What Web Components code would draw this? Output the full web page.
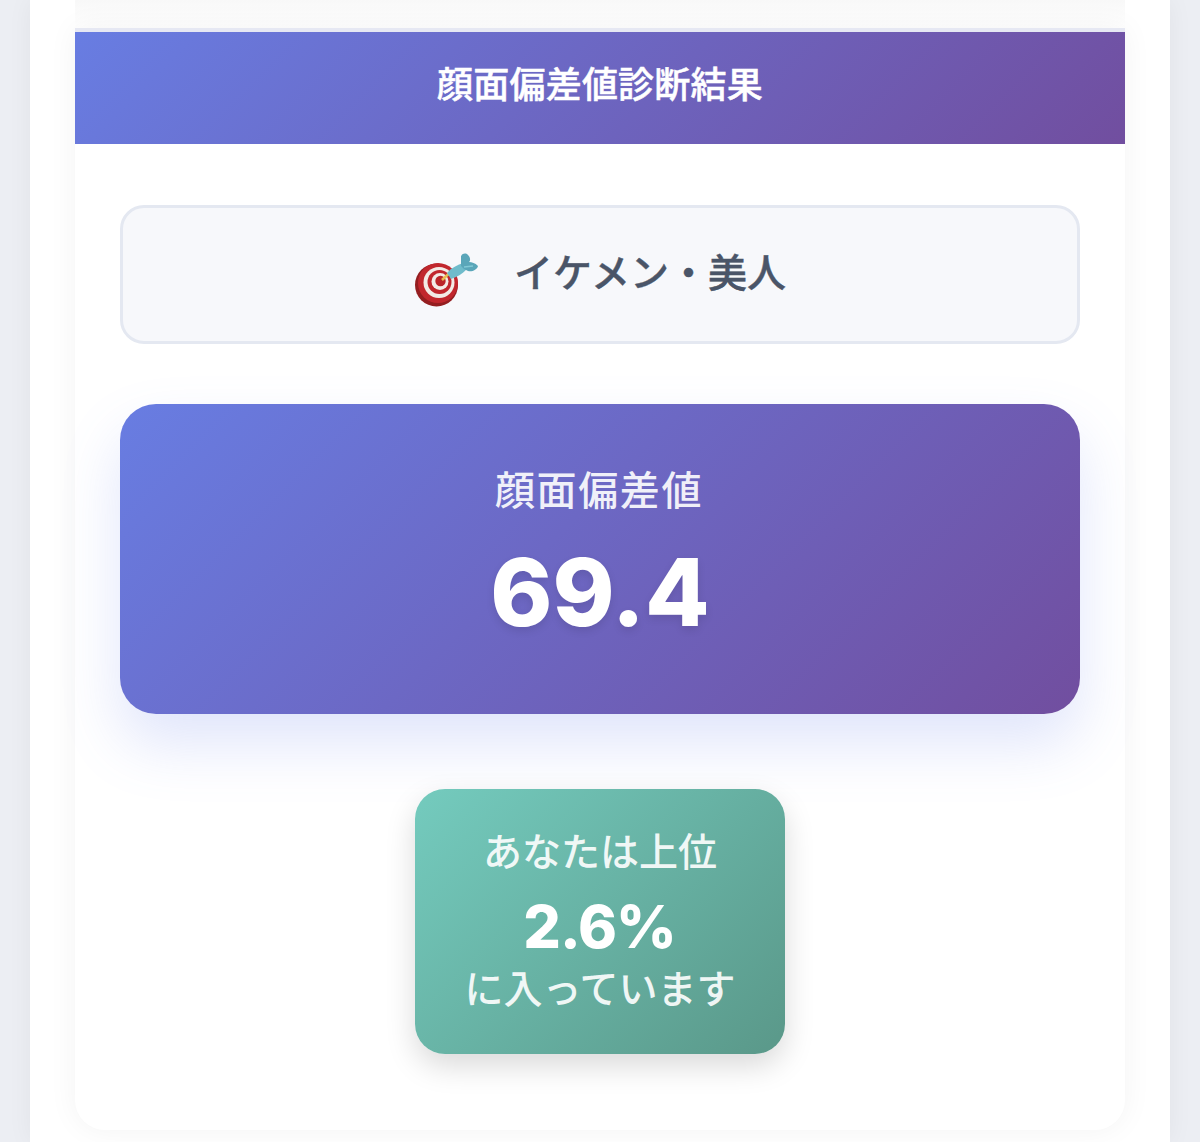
<!DOCTYPE html>
<html lang="ja">
<head>
<meta charset="utf-8">
<title>顔面偏差値診断結果</title>
<style>
    html, body { margin: 0; height: 1142px; overflow: hidden; }
    body {
        background: #eceef3;
        font-family: Inter, "Noto Sans CJK JP", sans-serif;
    }
</style>
</head>
<body>
<result-page>
    <result-card title="顔面偏差値診断結果">
        <type-box label="イケメン・美人"></type-box>
        <score-card label="顔面偏差値" value="69.4"></score-card>
        <rank-badge before="あなたは上位" value="2.6%" after="に入っています"></rank-badge>
    </result-card>
</result-page>

<script>
class ResultPage extends HTMLElement {
    constructor() {
        super();
        this.attachShadow({mode: 'open'});
        this.shadowRoot.innerHTML = `
            <style>
                :host {
                    display: block;
                    height: 1142px;
                    margin: 0 30px;
                    padding: 0 45px;
                    background: #fff;
                    box-shadow: 0 0 24px rgba(0, 0, 0, .05);
                }
                .prev {
                    height: 28px;
                    background: linear-gradient(#f8f8f8, #fff);
                }
            </style>
            <div class="prev"></div>
            <slot></slot>
        `;
    }
}

class ResultCard extends HTMLElement {
    constructor() {
        super();
        this.attachShadow({mode: 'open'});
        this.shadowRoot.innerHTML = `
            <style>
                :host {
                    display: block;
                    border-top: 4px solid #e6e8f3;
                    background: #fff;
                    border-radius: 0 0 30px 30px;
                    box-shadow: 0 0 30px rgba(0, 0, 0, .05);
                }
                header {
                    height: 112px;
                    box-sizing: border-box;
                    padding-bottom: 12px;
                    display: flex;
                    align-items: center;
                    justify-content: center;
                    background: linear-gradient(135deg, #687de2 0%, #714e9f 100%);
                    color: #fff;
                    font-size: 36px;
                    font-weight: 500;
                    -webkit-text-stroke: .5px #fff;
                    letter-spacing: .2px;
                }
                .body {
                    display: flex;
                    flex-direction: column;
                    align-items: center;
                    padding: 61px 45px 76px;
                }
            </style>
            <header></header>
            <div class="body"><slot></slot></div>
        `;
        this.shadowRoot.querySelector('header').textContent = this.getAttribute('title');
    }
}

class TypeBox extends HTMLElement {
    constructor() {
        super();
        this.attachShadow({mode: 'open'});
        this.shadowRoot.innerHTML = `
            <style>
                :host {
                    display: flex;
                    align-items: center;
                    justify-content: center;
                    gap: 36px;
                    box-sizing: border-box;
                    width: 960px;
                    height: 139px;
                    background: #f7f8fb;
                    border: 3px solid #e4e8f1;
                    border-radius: 24px;
                    color: #4a5568;
                    font-size: 39px;
                    font-weight: 500;
                    -webkit-text-stroke: .4px #4a5568;
                }
                svg { width: 64px; height: 56px; margin-top: 10px; flex: none; }
                span { margin-bottom: 10px; }
            </style>
            <!-- direct hit emoji, redrawn by hand -->
            <svg viewBox="0 0 64 56">
                <circle cx="22.5" cy="33" r="21.5" fill="#941e20"/>
                <circle cx="24" cy="31" r="20" fill="#c1272d"/>
                <circle cx="25" cy="30.5" r="15.5" fill="#f3ebe6"/>
                <circle cx="25.5" cy="30" r="12" fill="#c1272d"/>
                <circle cx="26" cy="29.5" r="8.5" fill="#f3ebe6"/>
                <circle cx="26.5" cy="29" r="5.2" fill="#bb2529"/>
                <path d="M28 28 L35 21.5" stroke="#e6bd52" stroke-width="2.5"/>
                <path d="M33 21 C37 16 43 13 49 11 L53 17 C48 22 43 25 37 27 Z" fill="#6fbccb"/>
                <path d="M47 14 L47 4 C49 1 52 1 54 3 C56 5 57 8 55 10 C58 10 61 11 64 14 C63 18 58 20 54 19 L50 17 Z" fill="#5aa6b9"/>
                <path d="M50 15 L59 14" stroke="#82c9d6" stroke-width="1.5"/>
            </svg>
            <span></span>
        `;
        this.shadowRoot.querySelector('span').textContent = this.getAttribute('label');
    }
}

class ScoreCard extends HTMLElement {
    constructor() {
        super();
        this.attachShadow({mode: 'open'});
        this.shadowRoot.innerHTML = `
            <style>
                :host {
                    display: flex;
                    flex-direction: column;
                    align-items: center;
                    box-sizing: border-box;
                    width: 960px;
                    height: 310px;
                    margin-top: 60px;
                    padding-top: 58px;
                    border-radius: 36px;
                    background: linear-gradient(135deg, #687de2 0%, #714e9f 100%);
                    box-shadow: 0 30px 60px rgba(102, 126, 234, .2);
                    color: #fff;
                }
                .label {
                    font-size: 40px;
                    line-height: 58px;
                    letter-spacing: 1.6px;
                    font-weight: 500;
                    margin-right: 2px;
                    opacity: .9;
                }
                .value {
                    margin-top: 14px;
                    font-size: 94px;
                    line-height: 116px;
                    font-weight: 800;
                    text-shadow: 0 4px 8px rgba(0, 0, 0, .1);
                }
            </style>
            <div class="label"></div>
            <div class="value"></div>
        `;
        this.shadowRoot.querySelector('.label').textContent = this.getAttribute('label');
        this.shadowRoot.querySelector('.value').textContent = this.getAttribute('value');
    }
}

class RankBadge extends HTMLElement {
    constructor() {
        super();
        this.attachShadow({mode: 'open'});
        this.shadowRoot.innerHTML = `
            <style>
                :host {
                    display: flex;
                    flex-direction: column;
                    align-items: center;
                    box-sizing: border-box;
                    width: 370px;
                    height: 265px;
                    margin-top: 75px;
                    padding-top: 38px;
                    border-radius: 30px;
                    background: linear-gradient(135deg, #74cbbe 0%, #5a9889 100%);
                    box-shadow: 0 12px 30px rgba(0, 0, 0, .15);
                    color: #fff;
                }
                .line { font-size: 39px; line-height: 50px; font-weight: 500; opacity: .9; }
                .value {
                    font-size: 59px;
                    line-height: 72px;
                    font-weight: 800;
                    letter-spacing: -1px;
                    margin: 14px 1px 0 0;
                }
                .after { margin-top: 1px; }
            </style>
            <div class="line before"></div>
            <div class="value"></div>
            <div class="line after"></div>
        `;
        this.shadowRoot.querySelector('.before').textContent = this.getAttribute('before');
        this.shadowRoot.querySelector('.value').textContent = this.getAttribute('value');
        this.shadowRoot.querySelector('.after').textContent = this.getAttribute('after');
    }
}

customElements.define('result-page', ResultPage);
customElements.define('result-card', ResultCard);
customElements.define('type-box', TypeBox);
customElements.define('score-card', ScoreCard);
customElements.define('rank-badge', RankBadge);
</script>
</body>
</html>
